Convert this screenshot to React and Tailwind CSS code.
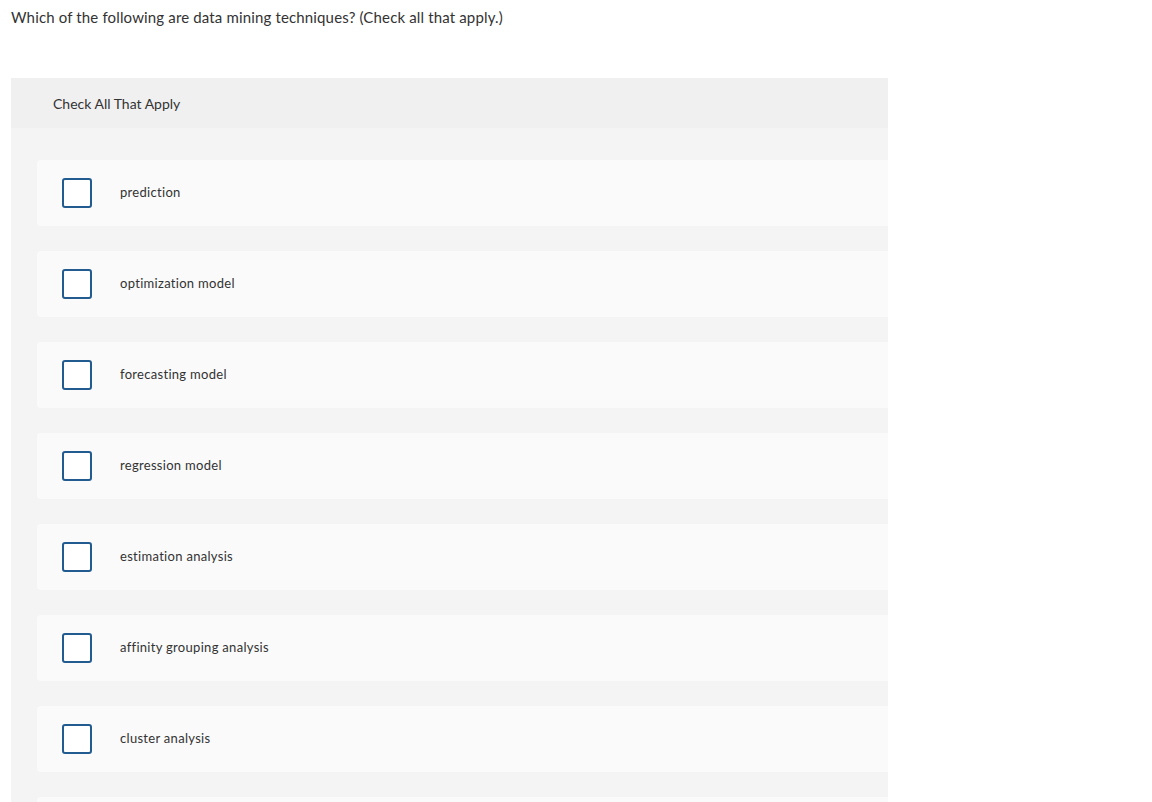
const options = [
  'prediction',
  'optimization model',
  'forecasting model',
  'regression model',
  'estimation analysis',
  'affinity grouping analysis',
  'cluster analysis',
];

export default function App() {
  return (
    <div className="min-h-screen bg-white text-[#333] font-['Lato','Open_Sans',sans-serif]">
      <div className="pl-[11px] pt-[8px] h-[78px]">
        <p className="text-[15px] leading-[18px] tracking-[0.15px]">
          Which of the following are data mining techniques? (Check all that apply.)
        </p>
      </div>

      <div className="ml-[11px] w-[877px] bg-[#f4f4f4]">
        <div className="h-[50px] bg-[#f0f0f0] flex items-center pl-[42px]">
          <span className="text-[14px]">Check All That Apply</span>
        </div>

        <div className="pl-[26px] pt-[32px] flex flex-col gap-[25px]">
          {options.map(opt => (
            <label key={opt} className="h-[66px] bg-[#fafafa] rounded-l-[4px] flex items-center pl-[25px]">
              <span className="w-[30px] h-[30px] border-2 border-[#215b8f] rounded-[3px] bg-white shrink-0" />
              <span className="ml-[28px] text-[13px] tracking-[0.3px]">{opt}</span>
            </label>
          ))}
          {/* next option starts just below the fold */}
          <div className="h-[66px] bg-[#fafafa] rounded-l-[4px]" />
        </div>
      </div>
    </div>
  );
}
